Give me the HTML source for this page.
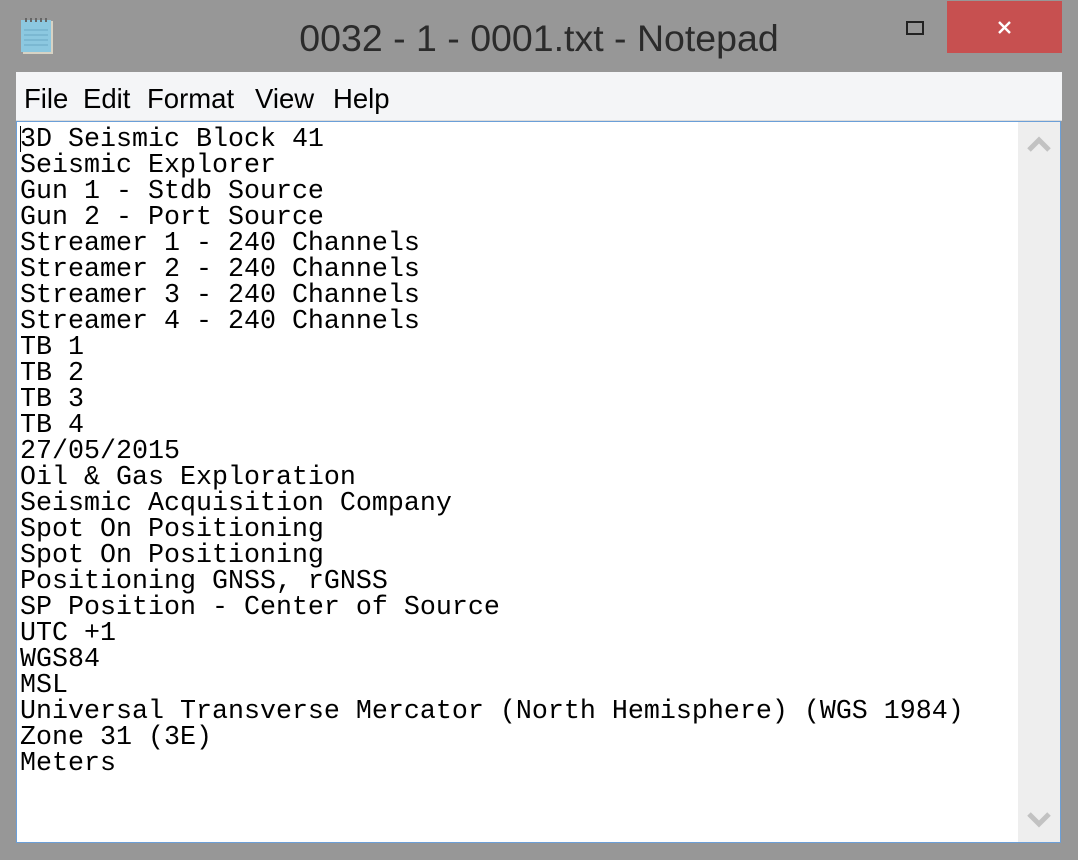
<!DOCTYPE html>
<html><head><meta charset="utf-8"><style>
html,body{margin:0;padding:0;}
body{width:1078px;height:860px;background:#979797;position:relative;overflow:hidden;font-family:"Liberation Sans",sans-serif;}
.title{position:absolute;left:0;width:1078px;top:16px;text-align:center;font-size:37.5px;color:#2b2b2b;line-height:44px;}
.close{position:absolute;left:947px;top:1px;width:115px;height:52px;background:#c75050;}
.menu{position:absolute;left:16px;top:72px;width:1046px;height:48px;background:#f4f5f7;border-bottom:1px solid #dcdcdc;}
.menu span{position:absolute;top:11px;font-size:27.5px;color:#000;}
.edit{position:absolute;left:16px;top:121px;width:1045px;height:722px;background:#fff;border:1px solid #6b9fd8;box-sizing:border-box;}
.sb{position:absolute;left:1018px;top:122px;width:42px;height:720px;background:#eeeeee;}
pre{position:absolute;left:20px;top:127px;margin:0;font-family:"Liberation Mono",monospace;font-size:26.67px;line-height:26px;color:#000;}
.caret{position:absolute;left:20px;top:126px;width:1px;height:26px;background:#000;}
</style></head><body>
<svg style="position:absolute;left:18px;top:16px" width="42" height="42" viewBox="0 0 42 42">
<rect x="5" y="5" width="30" height="33" fill="#d8d3c4"/>
<rect x="3" y="4" width="30" height="32" fill="#8cc8e0"/>
<g stroke="#6aa8c4" stroke-width="1"><line x1="6" y1="14" x2="30" y2="14"/><line x1="6" y1="19" x2="30" y2="19"/><line x1="6" y1="24" x2="30" y2="24"/><line x1="6" y1="29" x2="30" y2="29"/></g>
<g fill="#666"><rect x="7" y="2" width="2" height="4"/><rect x="12" y="2" width="2" height="4"/><rect x="17" y="2" width="2" height="4"/><rect x="22" y="2" width="2" height="4"/><rect x="27" y="2" width="2" height="4"/></g>
</svg>
<div class="title">0032 - 1 - 0001.txt - Notepad</div>
<div style="position:absolute;left:906px;top:21px;width:14px;height:10px;border:2px solid #222;"></div>
<div class="close"><svg width="115" height="52"><path d="M52 21 L63 32 M63 21 L52 32" stroke="#fff" stroke-width="2.4"/></svg></div>
<div class="menu"><span style="left:8px">File</span><span style="left:67px">Edit</span><span style="left:131px">Format</span><span style="left:239px">View</span><span style="left:317px">Help</span></div>
<div class="edit"></div>
<div class="sb"><svg width="42" height="720"><path d="M11 28 L21 18 L31 28" stroke="#c2c2c2" stroke-width="5" fill="none"/><path d="M11 692 L21 702 L31 692" stroke="#c2c2c2" stroke-width="5" fill="none"/></svg></div>
<pre>3D Seismic Block 41
Seismic Explorer
Gun 1 - Stdb Source
Gun 2 - Port Source
Streamer 1 - 240 Channels
Streamer 2 - 240 Channels
Streamer 3 - 240 Channels
Streamer 4 - 240 Channels
TB 1
TB 2
TB 3
TB 4
27/05/2015
Oil &amp; Gas Exploration
Seismic Acquisition Company
Spot On Positioning
Spot On Positioning
Positioning GNSS, rGNSS
SP Position - Center of Source
UTC +1
WGS84
MSL
Universal Transverse Mercator (North Hemisphere) (WGS 1984)
Zone 31 (3E)
Meters</pre>
<div class="caret"></div>
</body></html>
